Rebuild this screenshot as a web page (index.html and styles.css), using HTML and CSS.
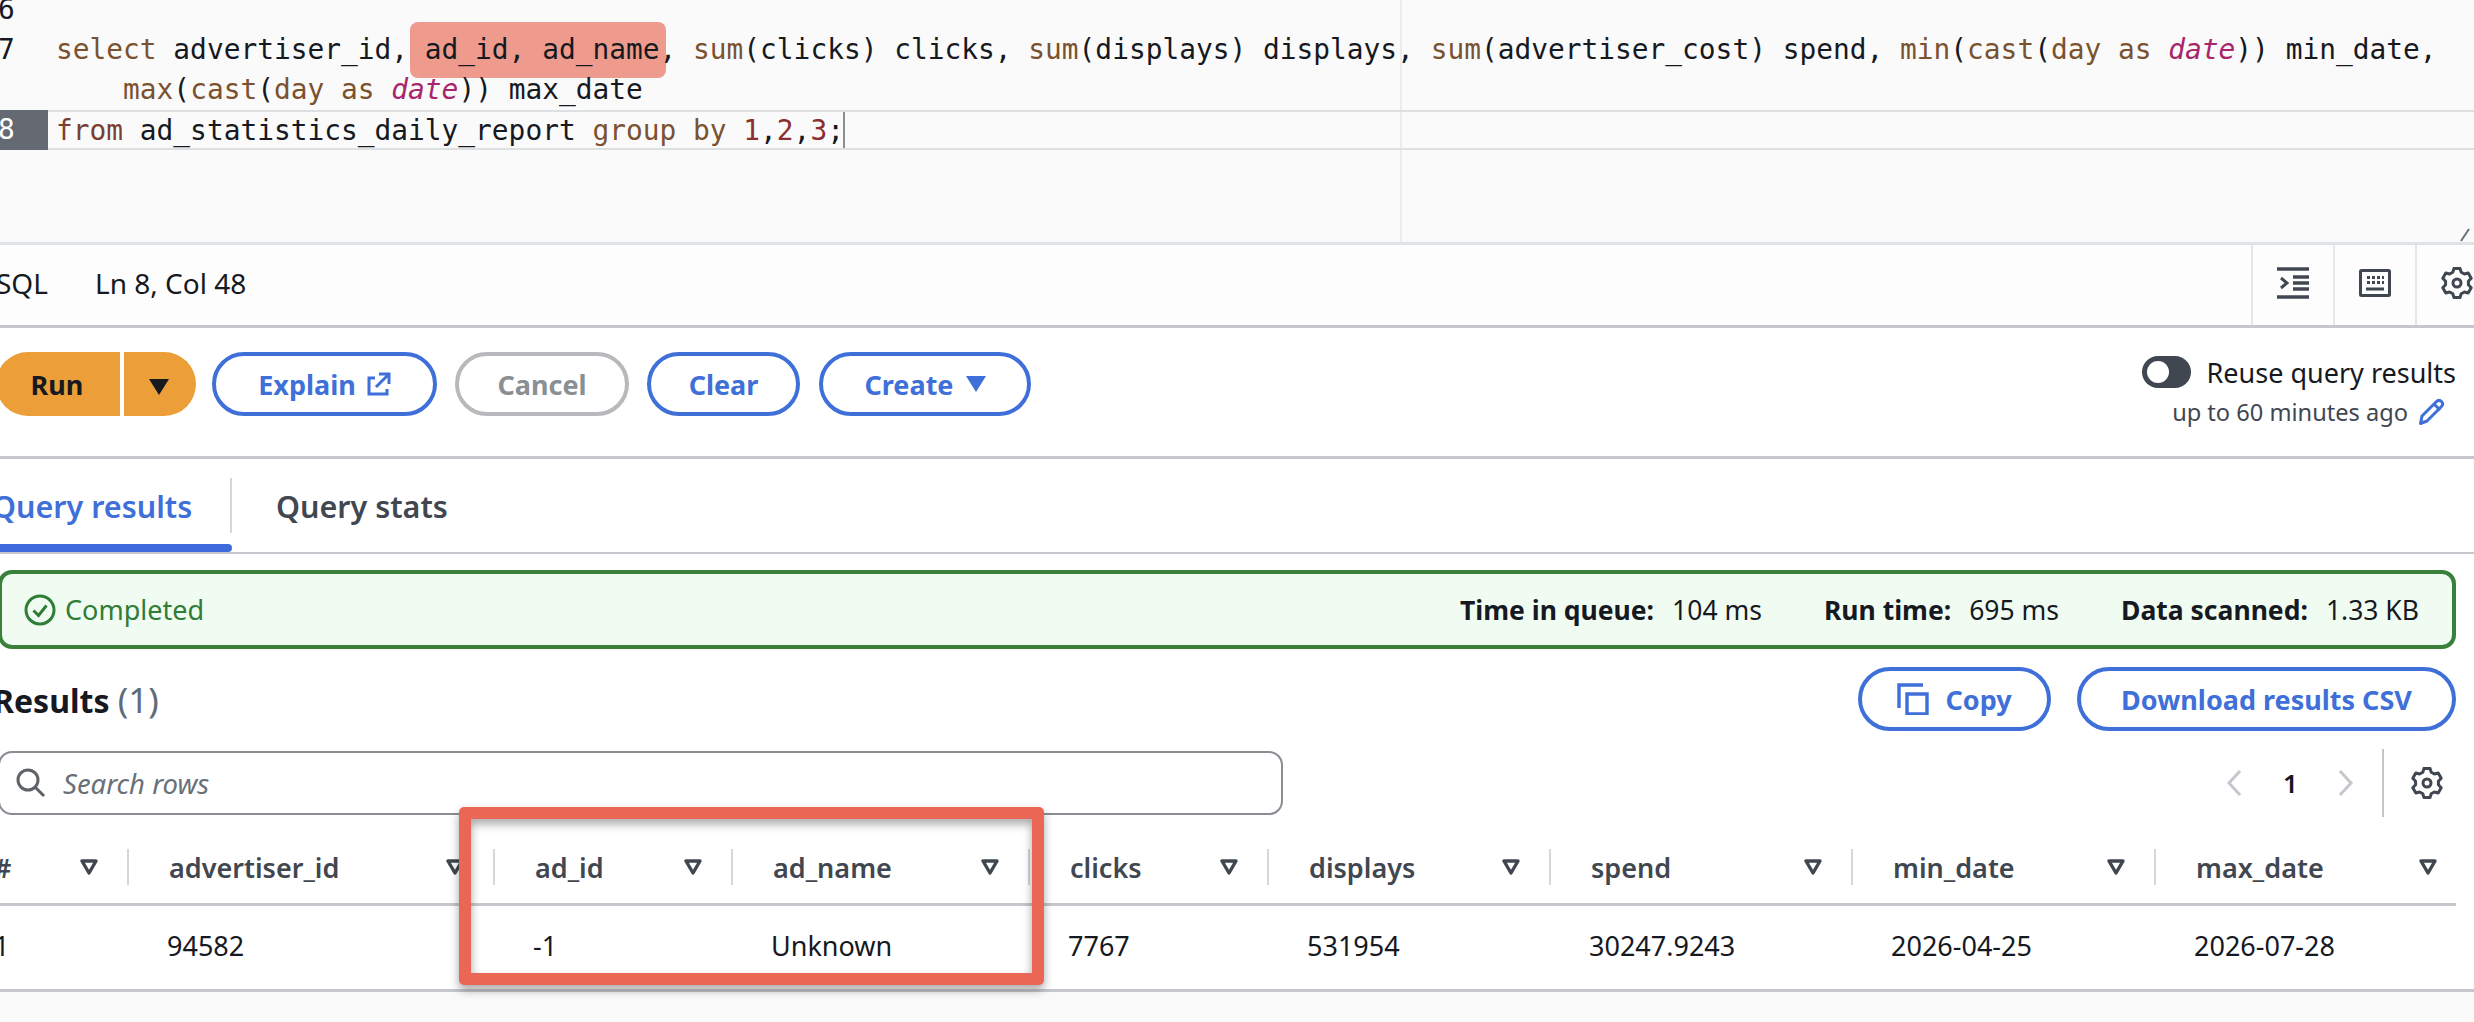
FILE: index.html
```html
<!DOCTYPE html>
<html>
<head>
<meta charset="utf-8">
<title>Query editor</title>
<link rel="stylesheet" href="styles.css">
</head>
<body>
<svg class="defs" width="0" height="0">
  <symbol id="gear" viewBox="0 .5 16 16">
    <path d="M6.5 1.2h3l.6 1.9 1.6.9 1.9-.5 1.5 2.6-1.4 1.5v1.8l1.4 1.5-1.5 2.6-1.9-.5-1.6.9-.6 1.9h-3l-.6-1.9-1.6-.9-1.9.5-1.5-2.6 1.4-1.5V7.6L.9 6.1l1.5-2.6 1.9.5 1.6-.9z" fill="none" stroke="currentColor" stroke-width="1.5" stroke-linejoin="round"/>
    <circle cx="8" cy="8.5" r="2" fill="none" stroke="currentColor" stroke-width="1.5"/>
  </symbol>
  <symbol id="sort" viewBox="0 0 20 16">
    <path d="M3 2h14l-7 12z" fill="none" stroke="currentColor" stroke-width="3.4" stroke-linejoin="round"/>
  </symbol>
</svg>

<!-- editor -->
<div class="editor">
  <div class="margin-line"></div>
  <div class="highlight"></div>
  <div class="line first"><span class="gutter">6</span></div>
  <div class="line tall">
    <span class="gutter">7</span>
    <div class="code"><span class="kw">select</span> advertiser_id, ad_id, ad_name, <span class="kw">sum</span>(clicks) clicks, <span class="kw">sum</span>(displays) displays, <span class="kw">sum</span>(advertiser_cost) spend, <span class="kw">min</span>(<span class="kw">cast</span>(<span class="kw">day</span> <span class="kw">as</span> <span class="ty">date</span>)) min_date,<br>&nbsp;&nbsp;&nbsp;&nbsp;<span class="kw">max</span>(<span class="kw">cast</span>(<span class="kw">day</span> <span class="kw">as</span> <span class="ty">date</span>)) max_date</div>
  </div>
  <div class="line active">
    <span class="gutter">8</span>
    <div class="code"><span class="kw2">from</span> ad_statistics_daily_report <span class="kw">group by</span> <span class="num">1</span>,<span class="num">2</span>,<span class="num">3</span>;<span class="cursor"></span></div>
  </div>
  <svg class="resize" width="14" height="16" viewBox="0 0 14 16"><path d="M1 15 9 3" stroke="#687078" stroke-width="2"/></svg>
</div>

<div class="statusbar">
  <span class="lang">SQL</span>
  <span class="pos">Ln 8, Col 48</span>
  <div class="status-icons">
    <div class="status-icon">
      <svg width="32" height="32" viewBox="0 0 32 32"><path d="M0 2h32M0 30h32M16 10h16M16 16h16M16 22h16" stroke="#414750" stroke-width="3.4" fill="none"/><path d="M4 11l6 5-6 5" stroke="#414750" stroke-width="3" fill="none"/></svg>
    </div>
    <div class="status-icon">
      <svg width="32" height="28" viewBox="0 0 32 28"><rect x="1.5" y="1.5" width="29" height="25" rx="1" fill="none" stroke="#414750" stroke-width="3"/><path d="M8 7h3v3H8zM13 7h3v3h-3zM18 7h3v3h-3zM23 7h2v3h-2zM8 12h3v3H8zM13 12h3v3h-3zM18 12h3v3h-3zM23 12h2v3h-2z" fill="#414750"/><path d="M7 20h18" stroke="#414750" stroke-width="3"/></svg>
    </div>
    <div class="status-icon">
      <svg class="gear" width="32" height="32"><use href="#gear"/></svg>
    </div>
  </div>
</div>

<!-- toolbar -->
<div class="toolbar">
  <div class="run-group">
    <button class="run">Run</button>
    <button class="run-arrow"><i class="tri dark"></i></button>
  </div>
  <button class="btn explain">Explain
    <svg width="24" height="24" viewBox="0 0 24 24"><path d="M8 6H2v16h18v-5" fill="none" stroke="#3f6fd8" stroke-width="3"/><path d="M9 15 22 2M12 2h10v10" fill="none" stroke="#3f6fd8" stroke-width="3"/></svg>
  </button>
  <button class="btn disabled cancel">Cancel</button>
  <button class="btn clear">Clear</button>
  <button class="btn create">Create <i class="tri blue"></i></button>
  <div class="reuse">
    <div class="reuse-top"><span class="toggle"><i></i></span><span>Reuse query results</span></div>
    <div class="reuse-sub">up to 60 minutes ago
      <svg width="28" height="28" viewBox="0 0 28 28"><path d="M2.500 25.500 4 18 18 4c2-2 4-2 5.500-.5s1.500 3.500-.5 5.500L9 23z" fill="none" stroke="#3f6fd8" stroke-width="3" stroke-linejoin="round"/><path d="M16 6l6 6" stroke="#3f6fd8" stroke-width="3"/></svg>
    </div>
  </div>
</div>

<!-- tabs -->
<div class="tabs">
  <div class="tab active-tab">Query results</div>
  <div class="tab">Query stats</div>
</div>

<!-- status flash -->
<div class="flash">
  <div class="flash-ok">
    <svg width="32" height="32" viewBox="0 0 32 32"><circle cx="16" cy="16" r="14" fill="none" stroke="#2f7d37" stroke-width="3"/><path d="M9.500 16.500l5 5 8-10" fill="none" stroke="#2f7d37" stroke-width="3"/></svg>
    <span>Completed</span>
  </div>
  <div class="flash-stats">
    <span><b>Time in queue:</b>104 ms</span>
    <span><b>Run time:</b>695 ms</span>
    <span><b>Data scanned:</b>1.33 KB</span>
  </div>
</div>

<!-- results -->
<div class="results-head">
  <h2>Results <span>(1)</span></h2>
  <div class="results-btns">
    <button class="btn copy">
      <svg width="32" height="32" viewBox="0 0 32 32"><path d="M10 11h20v20H10z" fill="none" stroke="#3f6fd8" stroke-width="3.400"/><path d="M2 25V2h24" fill="none" stroke="#3f6fd8" stroke-width="3.400"/></svg>
      Copy
    </button>
    <button class="btn download">Download results CSV</button>
  </div>
</div>

<div class="search-row">
  <div class="search">
    <svg width="30" height="30" viewBox="0 0 30 30"><circle cx="12" cy="12" r="10" fill="none" stroke="#5f6368" stroke-width="3"/><path d="M19 19l9 9" stroke="#5f6368" stroke-width="3"/></svg>
    <span>Search rows</span>
  </div>
  <div class="pager">
    <svg width="18" height="28" viewBox="0 0 18 28"><path d="M15 2 4 14l11 12" fill="none" stroke="#c6c6cd" stroke-width="3"/></svg>
    <span class="page-num">1</span>
    <svg width="18" height="28" viewBox="0 0 18 28"><path d="M3 2l11 12L3 26" fill="none" stroke="#c6c6cd" stroke-width="3"/></svg>
    <div class="pager-gear"><svg class="gear" width="32" height="32"><use href="#gear"/></svg></div>
  </div>
</div>

<!-- table -->
<div class="table">
  <div class="callout"></div>
  <div class="thead">
    <div class="th num-col"><span>#</span><svg width="20" height="16"><use href="#sort"/></svg></div>
    <div class="th"><span>advertiser_id</span><svg width="20" height="16"><use href="#sort"/></svg></div>
    <div class="th"><span>ad_id</span><svg width="20" height="16"><use href="#sort"/></svg></div>
    <div class="th"><span>ad_name</span><svg width="20" height="16"><use href="#sort"/></svg></div>
    <div class="th"><span>clicks</span><svg width="20" height="16"><use href="#sort"/></svg></div>
    <div class="th"><span>displays</span><svg width="20" height="16"><use href="#sort"/></svg></div>
    <div class="th"><span>spend</span><svg width="20" height="16"><use href="#sort"/></svg></div>
    <div class="th"><span>min_date</span><svg width="20" height="16"><use href="#sort"/></svg></div>
    <div class="th"><span>max_date</span><svg width="20" height="16"><use href="#sort"/></svg></div>
  </div>
  <div class="tbody">
    <div class="td num-col">1</div>
    <div class="td">94582</div>
    <div class="td">-1</div>
    <div class="td">Unknown</div>
    <div class="td">7767</div>
    <div class="td">531954</div>
    <div class="td">30247.9243</div>
    <div class="td">2026-04-25</div>
    <div class="td">2026-07-28</div>
  </div>
</div>
<div class="bottom-fill"></div>
</body>
</html>
```

FILE: styles.css
```css
html, body {
    margin: 0;
    height: 100%;
    overflow: hidden;
}

body {
    display: flex;
    flex-direction: column;
    width: 2474px;
    height: 1022px;
    background-color: #fff;
    font-family: "Noto Sans", "Open Sans", sans-serif;
    font-size: 26px;
    color: #16191f;
}

.defs {
    position: absolute;
}

button {
    font-family: inherit;
    cursor: pointer;
}

/* editor */
.editor {
    position: relative;
    flex: none;
    height: 242px;
    background-color: #fafafa;
    border-bottom: 3px solid #e0e3e6;
    overflow: hidden;
    font-family: "DejaVu Sans Mono", monospace;
    font-size: 27.85px;
    line-height: 40px;
}

.margin-line {
    position: absolute;
    left: 1400px;
    top: 0;
    bottom: 0;
    width: 2px;
    background-color: #eaeded;
}

.highlight {
    position: absolute;
    left: 410px;
    top: 22px;
    width: 256px;
    height: 56px;
    border-radius: 8px;
    background-color: #ee9b8d;
}

.line {
    position: relative;
    display: flex;
    white-space: nowrap;
}

.line.first {
    height: 30px;
    align-items: flex-end;
}

.line.first .gutter {
    height: 40px;
}

.line.tall {
    height: 80px;
}

.line.active {
    height: 40px;
    box-sizing: border-box;
    line-height: 38px;
    border-top: 2px solid #dce0e0;
    border-bottom: 2px solid #dce0e0;
}

.gutter {
    flex: none;
    width: 48px;
    margin-left: -2px;
    margin-right: 10px;
    color: #16191f;
}

.line.active .gutter {
    margin-left: 0;
    margin-top: -2px;
    margin-bottom: -2px;
    margin-right: 8px;
    padding-left: 0;
    line-height: 40px;
    height: 40px;
    text-indent: -2px;
    background-color: #656a72;
    color: #fff;
}

.kw {
    color: #7a5230;
}

.kw2 {
    color: #7a3f2e;
}

.num {
    color: #8b2e2e;
}

.ty {
    color: #a8246b;
    font-style: italic;
}

.cursor {
    display: inline-block;
    width: 2px;
    height: 36px;
    margin-left: -1px;
    vertical-align: top;
    background-color: #8a8f94;
}

.resize {
    position: absolute;
    right: 0;
    bottom: 0;
}

/* status bar */
.statusbar {
    flex: none;
    box-sizing: border-box;
    display: flex;
    align-items: center;
    height: 83px;
    padding-bottom: 4px;
    background-color: #fdfdfd;
    border-bottom: 3px solid #c6c6cd;
    font-size: 28px;
}

.lang {
    margin-left: -4px;
    width: 99px;
}

.status-icons {
    display: flex;
    align-self: stretch;
    margin-left: auto;
    margin-right: -23px;
    margin-bottom: -4px;
}

.status-icon {
    box-sizing: border-box;
    display: flex;
    align-items: center;
    justify-content: center;
    width: 82px;
    padding-bottom: 4px;
    border-left: 2px solid #e4e6e8;
    color: #414750;
}

.gear {
    display: block;
    color: #414750;
}

/* toolbar */
.toolbar {
    flex: none;
    position: relative;
    box-sizing: border-box;
    display: flex;
    align-items: flex-start;
    height: 131px;
    padding-top: 24px;
    border-bottom: 3px solid #c6c6cd;
}

.run-group {
    display: flex;
    gap: 4px;
    margin-left: -4px;
    margin-right: 16px;
}

.run,
.run-arrow {
    height: 64px;
    border: 0;
    background-color: #ec9f38;
    font-size: 27px;
    font-weight: 700;
    color: #16191f;
}

.run {
    width: 124px;
    padding-left: 4px;
    border-radius: 32px 0 0 32px;
}

.run-arrow {
    width: 72px;
    padding-right: 8px;
    border-radius: 0 32px 32px 0;
}

.tri {
    display: inline-block;
    width: 0;
    height: 0;
    border-left: 10px solid transparent;
    border-right: 10px solid transparent;
    border-top: 16px solid #16191f;
}

.tri.blue {
    border-top-color: #3f6fd8;
    margin-left: 12px;
}

.btn {
    box-sizing: border-box;
    display: flex;
    align-items: center;
    justify-content: center;
    height: 64px;
    padding: 0;
    border: 4px solid #3f6fd8;
    border-radius: 32px;
    background-color: #fff;
    font-size: 27px;
    font-weight: 700;
    color: #3f6fd8;
}

.explain {
    gap: 11px;
    width: 225px;
    margin-right: 18px;
}

.cancel {
    width: 174px;
    margin-right: 18px;
}

.disabled {
    border-color: #b8b8bd;
    color: #8a8f94;
}

.clear {
    width: 153px;
    margin-right: 19px;
}

.create {
    width: 212px;
}

.reuse {
    position: absolute;
    right: 18px;
    top: 24px;
    text-align: right;
}

.reuse-top {
    display: flex;
    align-items: center;
    gap: 16px;
    height: 40px;
    font-size: 27px;
}

.toggle {
    box-sizing: border-box;
    display: block;
    width: 49px;
    height: 32px;
    padding: 5px;
    border-radius: 16px;
    background-color: #414750;
}

.toggle i {
    display: block;
    width: 22px;
    height: 22px;
    border-radius: 50%;
    background-color: #fff;
}

.reuse-sub {
    display: flex;
    align-items: center;
    justify-content: flex-end;
    gap: 10px;
    margin-top: 4px;
    margin-right: 10px;
    font-size: 23.6px;
    color: #414750;
}

/* tabs */
.tabs {
    flex: none;
    display: flex;
    height: 93px;
    border-bottom: 2px solid #c6c6cd;
    box-sizing: content-box;
}

.tab {
    display: flex;
    align-items: center;
    height: 55px;
    margin-top: 19px;
    padding: 0 44px;
    font-size: 30.5px;
    font-weight: 600;
    color: #414750;
}

.active-tab {
    position: relative;
    width: 232px;
    box-sizing: border-box;
    padding: 0;
    margin-left: 0;
    border-right: 2px solid #d5d5da;
    color: #3f6fd8;
    text-indent: -8px;
    white-space: nowrap;
}

.active-tab::after {
    content: "";
    position: absolute;
    left: 0;
    right: -2px;
    top: 66px;
    height: 8px;
    border-radius: 0 4px 4px 0;
    background-color: #3d6bdc;
}

/* flash */
.flash {
    flex: none;
    box-sizing: border-box;
    display: flex;
    align-items: center;
    justify-content: space-between;
    width: 2458px;
    height: 79px;
    margin-top: 16px;
    margin-left: -2px;
    padding: 0 33px 0 22px;
    border: 4px solid #3a7f3a;
    border-radius: 14px;
    background-color: #f0fcf2;
}

.flash-ok {
    display: flex;
    align-items: center;
    gap: 9px;
    font-size: 27px;
    color: #2f7d37;
}

.flash-stats {
    display: flex;
    gap: 62px;
    font-size: 26.5px;
}

.flash-stats b {
    margin-right: 18px;
    font-weight: 700;
}

/* results */
.results-head {
    flex: none;
    display: flex;
    align-items: center;
    justify-content: space-between;
    width: 2456px;
    height: 64px;
    margin-top: 18px;
}

.results-head h2 {
    margin: 0 0 0 -7px;
    font-size: 32px;
    font-weight: 700;
}

.results-head h2 span {
    font-size: 35px;
    font-weight: 400;
    color: #5f6b7a;
}

.results-btns {
    display: flex;
    gap: 26px;
}

.copy {
    gap: 16px;
    width: 193px;
}

.download {
    width: 379px;
}

.search-row {
    flex: none;
    display: flex;
    align-items: center;
    height: 68px;
    margin-top: 18px;
}

.search {
    box-sizing: border-box;
    display: flex;
    align-items: center;
    gap: 17px;
    width: 1285px;
    height: 64px;
    margin-left: -2px;
    padding-left: 16px;
    border: 2px solid #8c8c94;
    border-radius: 14px;
    font-style: italic;
    font-size: 27.5px;
    color: #687078;
}

.pager {
    display: flex;
    align-items: center;
    margin-left: 942px;
    height: 68px;
}

.page-num {
    margin: 0 40px;
    width: 14px;
    font-size: 26px;
    font-weight: 600;
}

.pager-gear {
    display: flex;
    align-items: center;
    height: 68px;
    margin-left: 27px;
    padding-left: 27px;
    border-left: 2px solid #c6c6cd;
}

/* table */
.table {
    position: relative;
    flex: none;
    width: 2474px;
    margin-top: 10px;
}

.thead,
.tbody {
    display: grid;
    grid-template-columns: 127px 366px 238px 297px 239px 282px 302px 303px 302px;
    width: 2456px;
}

.thead {
    height: 76px;
    border-bottom: 3px solid #c6c6cd;
    align-items: end;
}

.th {
    box-sizing: border-box;
    display: flex;
    align-items: center;
    justify-content: space-between;
    height: 36px;
    margin-bottom: 18px;
    padding: 0 28px 0 40px;
    border-left: 2px solid #d5d5da;
    font-size: 27px;
    font-weight: 600;
    color: #414750;
}

.th svg {
    flex: none;
    color: #414750;
}

.th:last-child {
    padding-right: 18px;
}

.num-col {
    border-left: 0;
    padding-left: 0;
    text-indent: -6px;
}

.th.num-col {
    padding-right: 28px;
    padding-left: 0;
    border-left: 0;
}

.tbody {
    width: 2474px;
    height: 79px;
    padding-bottom: 4px;
    align-items: center;
    border-bottom: 3px solid #c6c6cd;
}

.td {
    padding-left: 40px;
    font-size: 27px;
    color: #16191f;
}

.td.num-col {
    padding-left: 0;
}

.callout {
    position: absolute;
    left: 459px;
    top: -20px;
    box-sizing: border-box;
    width: 585px;
    height: 178px;
    border: 12px solid #ea6756;
    border-radius: 5px;
    filter: drop-shadow(0 5px 5px rgba(0, 0, 0, 0.35));
    z-index: 2;
}

.bottom-fill {
    flex: 1;
    background-color: #fafafa;
}
```
